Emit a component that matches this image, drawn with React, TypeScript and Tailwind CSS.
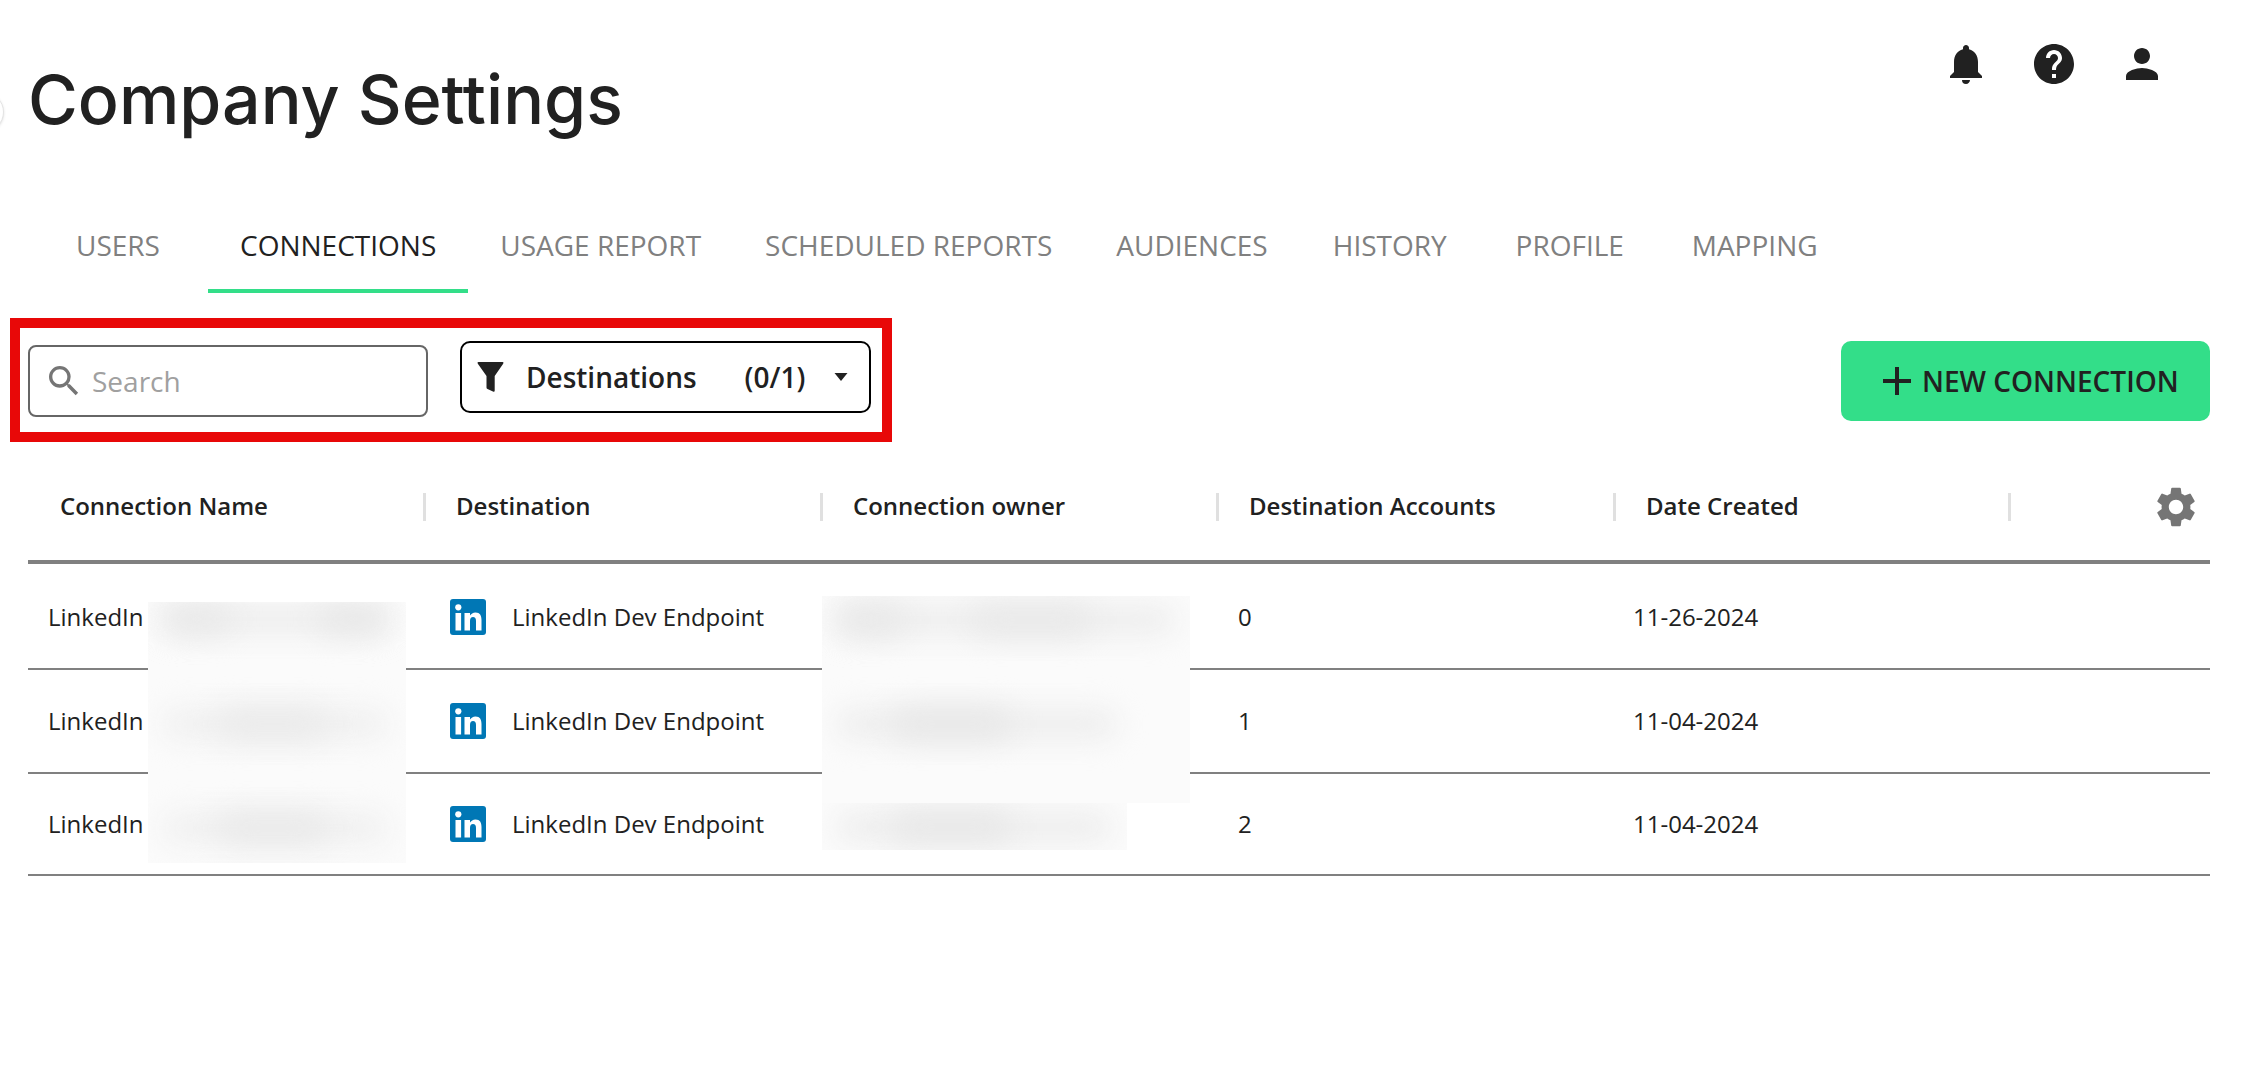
import React from 'react';
import { MdNotifications, MdHelp, MdPerson, MdSearch, MdAdd, MdSettings } from 'react-icons/md';

const tabs = ['USERS', 'CONNECTIONS', 'USAGE REPORT', 'SCHEDULED REPORTS', 'AUDIENCES', 'HISTORY', 'PROFILE', 'MAPPING'];

const columns = ['Connection Name', 'Destination', 'Connection owner', 'Destination Accounts', 'Date Created'];

const rows = [
  { accounts: '0', created: '11-26-2024', height: 'h-[106px] pt-[2px]' },
  { accounts: '1', created: '11-04-2024', height: 'h-[104px]' },
  { accounts: '2', created: '11-04-2024', height: 'h-[102px]' },
];

const gridCols = 'grid grid-cols-[395px_397px_396px_397px_395px_202px]';

const LinkedInLogo = () => (
  <svg width="36" height="36" viewBox="0 0 36 36" className="shrink-0">
    <rect width="36" height="36" rx="3" fill="#0077B5" />
    <circle cx="8.3" cy="8.3" r="3.1" fill="#fff" />
    <rect x="5.5" y="14" width="5.6" height="17.5" fill="#fff" />
    <path
      d="M14.5 14H20v2.5c1-1.5 3-3 5.5-3 4.5 0 6 3 6 7.5v10.500H26V22c0-2.500-1-4-3-4s-3 1.500-3 4v9.500h-5.500z"
      fill="#fff"
    />
  </svg>
);

const FilterIcon = () => (
  <svg width="27" height="30" viewBox="0 0 27 30" className="shrink-0" fill="#212121">
    <path d="M1.500 0H25.500Q27.200 0 26 2L17.700 14V28.500Q17.700 30.300 16 29.500L10.500 27Q9.500 26.500 9.500 25.500V14L1 2Q-0.200 0 1.500 0Z" />
  </svg>
);

// blurred-out name / email over the rows
const Smudge = ({ className }: { className: string }) => (
  <div className={`absolute rounded-full blur-[14px] ${className}`}></div>
);

export default function App() {
  return (
    <div className="relative h-[1092px] w-[2258px] overflow-hidden bg-white font-['Open_Sans',sans-serif] text-[#212121]">
      {/* collapse button, mostly off screen */}
      <div className="absolute left-[-36px] top-[92px] h-10 w-10 rounded-full border border-[#e4e4e4] bg-white shadow-sm"></div>

      {/* Header */}
      <div className="flex h-[197px] items-start justify-between pl-[28px] pr-[92px]">
        <h1 className="mt-[58px] font-['Inter',sans-serif] text-[68px] leading-[82px] font-medium">Company Settings</h1>
        <div className="mt-[40px] flex gap-10">
          <MdNotifications size={48} />
          <MdHelp size={48} />
          <MdPerson size={48} />
        </div>
      </div>

      {/* Tabs */}
      <div className="flex h-[96px] pl-[28px]">
        {tabs.map((tab) => (
          <div
            key={tab}
            className={`flex min-w-[180px] items-center justify-center border-b-4 px-8 pt-1 text-[28px] ${
              tab === 'CONNECTIONS' ? 'border-[#33de89] text-[#212121]' : 'border-transparent text-[#808080]'
            }`}
          >
            {tab}
          </div>
        ))}
      </div>

      {/* Toolbar */}
      <div className="mt-[25px] flex h-[124px] items-start justify-between pl-[10px] pr-[48px]">
        <div className="flex h-[124px] w-[882px] items-start gap-[32px] border-[10px] border-[#e80808] pl-[8px]">
          <div className="mt-[17px] flex h-[72px] w-[400px] items-center rounded-lg border-2 border-[#666666] pl-[14px]">
            <MdSearch size={40} className="text-[#757575]" />
            <span className="ml-[8px] text-[28px] text-[#a0a0a0]">Search</span>
          </div>
          <div className="mt-[13px] flex h-[72px] w-[411px] items-center rounded-[10px] border-2 border-black pl-[15px]">
            <FilterIcon />
            <span className="ml-[22px] text-[28px] font-semibold">Destinations</span>
            <span className="ml-[48px] text-[28px] font-semibold">(0/1)</span>
            <svg width="14" height="8" viewBox="0 0 14 8" className="ml-[29px]" fill="#212121">
              <path d="M0.500 0H13.500L7 8Z" />
            </svg>
          </div>
        </div>
        <button className="mt-[23px] flex h-[80px] w-[369px] items-center rounded-[10px] bg-[#33de89] pl-[32px] text-[28px] font-semibold">
          <MdAdd size={48} />
          <span className="ml-[1px]">NEW CONNECTION</span>
        </button>
      </div>

      {/* Table */}
      <div className="relative ml-[28px] w-[2182px]">
        <div className={`${gridCols} border-b-4 border-[#808080] pb-[39px] pt-[51px]`}>
          {columns.map((col, i) => (
            <div
              key={col}
              className={`flex h-[28px] items-center pb-[2px] text-[24px] font-semibold ${i > 0 ? 'border-l-[3px] border-[#e0e0e0] pl-[30px]' : 'pl-[32px]'}`}
            >
              {col}
            </div>
          ))}
          <div className="flex h-[28px] items-center justify-end border-l-[3px] border-[#e0e0e0] pr-[10px]">
            <MdSettings size={48} className="text-[#757575]" />
          </div>
        </div>

        {rows.map((row, i) => (
          <div key={i} className={`${gridCols} ${row.height} items-center border-b-2 border-[#808080] text-[24px]`}>
            <div className="pl-[20px]">LinkedIn</div>
            <div className="flex items-center gap-[26px] pl-[27px]">
              <LinkedInLogo />
              <span>LinkedIn Dev Endpoint</span>
            </div>
            <div></div>
            <div className="pl-[22px]">{row.accounts}</div>
            <div className="pl-[20px]">{row.created}</div>
            <div></div>
          </div>
        ))}

        {/* Redacted name column */}
        <div className="absolute left-[120px] top-[160px] h-[261px] w-[258px] overflow-hidden bg-[#fbfbfb]">
          <Smudge className="left-[14px] top-[2px] h-[30px] w-[226px] bg-[#eeeeee]" />
          <Smudge className="left-[14px] top-[2px] h-[30px] w-[70px] bg-[#e9e9e9]" />
          <Smudge className="left-[170px] top-[2px] h-[30px] w-[70px] bg-[#e8e8e8]" />
          <Smudge className="left-[14px] top-[106px] h-[32px] w-[226px] bg-[#f0f0f0]" />
          <Smudge className="left-[70px] top-[106px] h-[32px] w-[110px] bg-[#ebebeb]" />
          <Smudge className="left-[14px] top-[210px] h-[32px] w-[226px] bg-[#f0f0f0]" />
          <Smudge className="left-[70px] top-[210px] h-[32px] w-[110px] bg-[#eaeaea]" />
        </div>

        {/* Redacted owner column */}
        <div className="absolute left-[794px] top-[154px] h-[207px] w-[368px] overflow-hidden bg-[#fbfbfb]">
          <Smudge className="left-[14px] top-[8px] h-[32px] w-[340px] bg-[#eeeeee]" />
          <Smudge className="left-[14px] top-[8px] h-[32px] w-[70px] bg-[#e9e9e9]" />
          <Smudge className="left-[150px] top-[8px] h-[32px] w-[120px] bg-[#e9e9e9]" />
          <Smudge className="left-[14px] top-[112px] h-[32px] w-[282px] bg-[#eeeeee]" />
          <Smudge className="left-[70px] top-[112px] h-[32px] w-[120px] bg-[#e8e8e8]" />
        </div>
        <div className="absolute left-[794px] top-[361px] h-[47px] w-[305px] overflow-hidden bg-[#fbfbfb]">
          <Smudge className="left-[14px] top-[8px] h-[32px] w-[276px] bg-[#eeeeee]" />
          <Smudge className="left-[70px] top-[8px] h-[32px] w-[120px] bg-[#e8e8e8]" />
        </div>
      </div>
    </div>
  );
}
